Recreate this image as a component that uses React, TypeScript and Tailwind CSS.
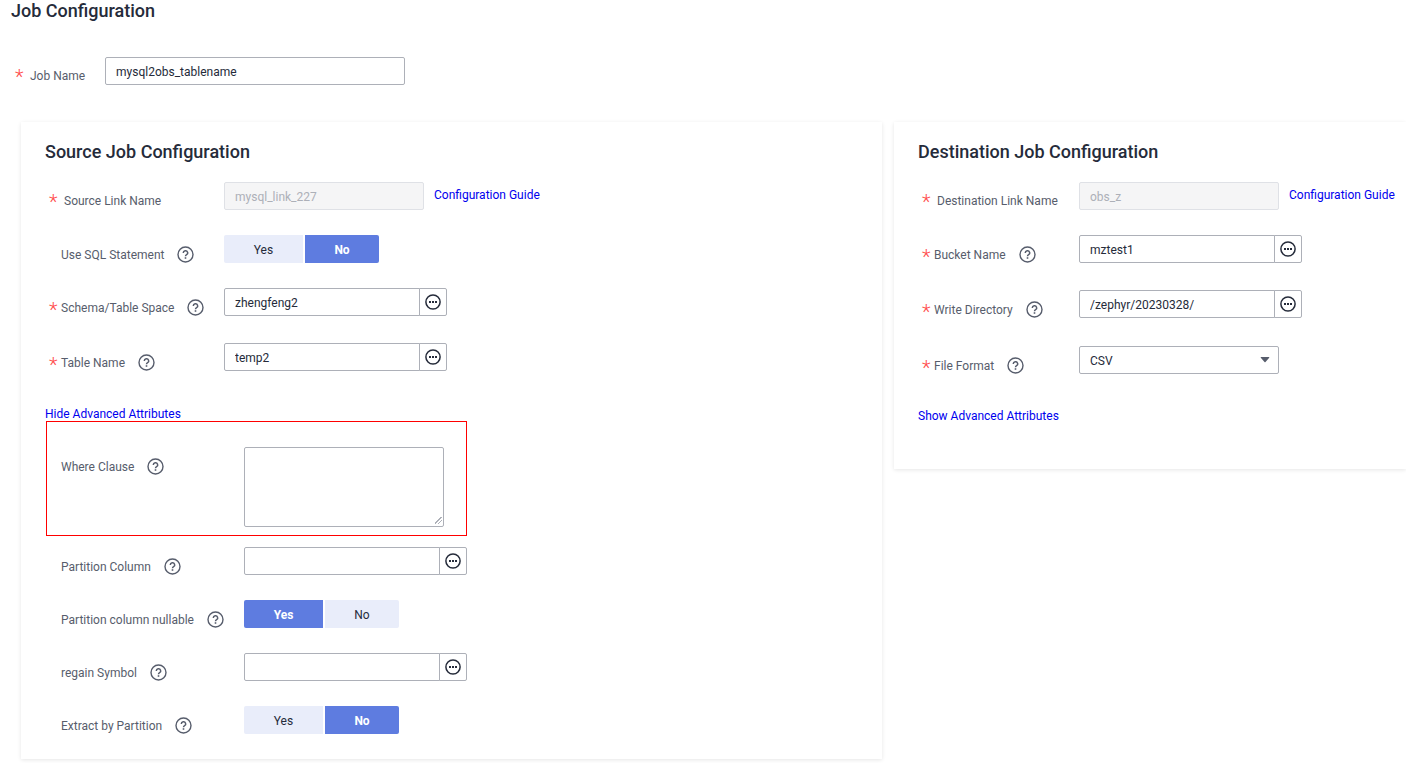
import { useId, useState, type ReactNode } from "react";

const FIELD =
  "h-7 shrink-0 rounded-[2px] border border-[#adb0b8] bg-white px-[10px] pt-[2px] text-[12px] text-[#252b3a] outline-none focus:border-[#5e7ce0]";
const LINK = "text-[12px] leading-4 text-[#0000ee]";

function HelpIcon() {
  return (
    <svg viewBox="0 0 17 17" className="size-[17px]" fill="none" stroke="#575d6c" aria-hidden="true">
      <circle cx="8.5" cy="8.5" r="7.5" strokeWidth="1.4" />
      <path d="M6.3 6.9a2.2 2.1 0 1 1 3.3 1.8c-.7.4-1.1.7-1.1 1.5" strokeWidth="1.5" />
      <path d="M8.5 11.2v1.6" strokeWidth="1.6" />
    </svg>
  );
}

function MoreIcon() {
  return (
    <svg viewBox="0 0 16 16" className="size-4" aria-hidden="true">
      <circle cx="8" cy="8" r="7.1" fill="none" stroke="#252b3a" strokeWidth="1.5" />
      <path d="M4 7h2v2H4zM7 7h2v2H7zM10 7h2v2h-2z" fill="#252b3a" />
    </svg>
  );
}

type LabelProps = {
  text: string;
  htmlFor?: string;
  id?: string;
  required?: boolean;
  help?: boolean;
  wide?: boolean;
};

function Label({ text, htmlFor, id, required, help, wide }: LabelProps) {
  return (
    <div className="flex h-5 items-center text-[12px] leading-5 whitespace-nowrap text-[#575d6c]">
      <span className={`h-5 shrink-0 text-[20px] font-light text-[#ff4c4c] ${wide ? "w-[15px] leading-[22px]" : "w-3 leading-6"}`}>
        {required ? "*" : ""}
      </span>
      <label htmlFor={htmlFor} id={id}>
        {text}
      </label>
      {help && (
        <button type="button" aria-label={`Help: ${text}`} className="mb-px ml-[13px]">
          <HelpIcon />
        </button>
      )}
    </div>
  );
}

type RowProps = LabelProps & { col: string; className?: string; tall?: boolean; children: ReactNode };

function Row({ col, className = "", tall, children, ...label }: RowProps) {
  return (
    <div className={`flex items-start ${tall ? "h-20" : "h-7"} ${className}`}>
      <div className={`shrink-0 pl-1 ${label.wide ? "pt-[9px]" : "pt-[10px]"} ${col}`}>
        <Label {...label} />
      </div>
      {children}
    </div>
  );
}

type FieldRowProps = { label: string; col: string; className?: string; required?: boolean; value?: string };

function LinkNameRow({ label, col, className, value }: FieldRowProps) {
  const id = useId();
  return (
    <Row text={label} htmlFor={id} col={col} className={className} required wide>
      <input
        id={id}
        disabled
        defaultValue={value}
        className="h-7 w-[200px] shrink-0 rounded-[2px] border border-[#dfe1e6] bg-[#f5f5f6] px-[10px] pt-[2px] text-[12px] text-[#adb0b8]"
      />
      <a href="#guide" className={`ml-[10px] pt-[5px] whitespace-nowrap ${LINK}`}>
        Configuration Guide
      </a>
    </Row>
  );
}

function PickerRow({ label, col, className, required, value = "" }: FieldRowProps) {
  const id = useId();
  return (
    <Row text={label} htmlFor={id} col={col} className={className} required={required} help>
      <div className="flex">
        <input id={id} defaultValue={value} className={`w-[196px] rounded-r-none ${FIELD}`} />
        <button
          type="button"
          aria-label={`Select ${label}`}
          className="-ml-px flex h-7 w-7 items-center justify-center rounded-r-[2px] border border-[#adb0b8] bg-white"
        >
          <MoreIcon />
        </button>
      </div>
    </Row>
  );
}

function ToggleRow({ label, col, className, initial }: FieldRowProps & { initial: boolean }) {
  const id = useId();
  const [on, setOn] = useState(initial);
  const active = "bg-[#5e7ce0] font-bold text-white";
  const idle = "bg-[#e9edfa] text-[#252b3a]";
  return (
    <Row text={label} id={id} col={col} className={className} help>
      <div role="group" aria-labelledby={id} className="flex gap-[2px] text-[12px]">
        <button type="button" aria-pressed={on} onClick={() => setOn(true)} className={`h-7 w-[79px] rounded-l-[2px] pt-[2px] ${on ? active : idle}`}>
          Yes
        </button>
        <button type="button" aria-pressed={!on} onClick={() => setOn(false)} className={`h-7 w-[74px] rounded-r-[2px] pt-[2px] ${on ? idle : active}`}>
          No
        </button>
      </div>
    </Row>
  );
}

function Card({ title, children }: { title: string; children: ReactNode }) {
  return (
    <section className="min-w-0 bg-white px-6 pt-[18px] shadow-[0_1px_4px_rgba(0,0,0,0.1)]">
      <h2 className="mb-[18px] text-[18px] leading-6 font-medium text-[#252b3a]">{title}</h2>
      {children}
    </section>
  );
}

const SOURCE = "w-[179px]";
const ADVANCED = "w-[199px]";
const DEST = "w-[161px]";

export default function App() {
  return (
    <main className="min-h-screen overflow-x-hidden bg-white pb-1 font-[Roboto,'Liberation_Sans',sans-serif]">
      <h1 className="pl-[11px] text-[18px] leading-[22px] font-medium text-[#252b3a]">Job Configuration</h1>

      <div className="mt-[35px] flex h-7 items-start pl-[15px]">
        <div className="w-[90px] shrink-0 pt-[9px]">
          <Label text="Job Name" htmlFor="job-name" required wide />
        </div>
        <input id="job-name" defaultValue="mysql2obs_tablename" className={`w-[300px] ${FIELD}`} />
      </div>

      <div className="mt-[37px] grid grid-cols-[861fr_512fr] items-start gap-3 pl-[21px]">
        <Card title="Source Job Configuration">
          <LinkNameRow label="Source Link Name" col={SOURCE} className="mb-[25px]" value="mysql_link_227" />
          <ToggleRow label="Use SQL Statement" col={SOURCE} className="mb-[25px]" initial={false} />
          <PickerRow label="Schema/Table Space" col={SOURCE} className="mb-[27px]" required value="zhengfeng2" />
          <PickerRow label="Table Name" col={SOURCE} className="mb-[35px]" required value="temp2" />
          <a href="#advanced" className={`block ${LINK}`}>
            Hide Advanced Attributes
          </a>
          <div className="relative mb-[11px] pt-[25px] pb-[9px]">
            <div className="pointer-events-none absolute -top-px bottom-0 left-px w-[421px] border border-[#ff0000]" />
            <Row text="Where Clause" htmlFor="where-clause" col={ADVANCED} help tall>
              <textarea
                id="where-clause"
                className="block h-20 w-[200px] resize rounded-[2px] border border-[#adb0b8] px-[10px] py-1 text-[12px] text-[#252b3a] outline-none [&::-webkit-resizer]:bg-[linear-gradient(135deg,transparent_0_42%,#adb0b8_42%_54%,transparent_54%_66%,#adb0b8_66%_78%,transparent_78%)] [&::-webkit-resizer]:bg-[length:7px_7px] [&::-webkit-resizer]:bg-[position:right_1px_bottom_2px] [&::-webkit-resizer]:bg-no-repeat"
              />
            </Row>
          </div>
          <PickerRow label="Partition Column" col={ADVANCED} className="mb-[25px]" />
          <ToggleRow label="Partition column nullable" col={ADVANCED} className="mb-[25px]" initial />
          <PickerRow label="regain Symbol" col={ADVANCED} className="mb-[25px]" />
          <ToggleRow label="Extract by Partition" col={ADVANCED} className="mb-[25px]" initial={false} />
        </Card>

        <Card title="Destination Job Configuration">
          <LinkNameRow label="Destination Link Name" col={DEST} className="mb-[25px]" value="obs_z" />
          <PickerRow label="Bucket Name" col={DEST} className="mb-[27px]" required value="mztest1" />
          <PickerRow label="Write Directory" col={DEST} className="mb-[28px]" required value="/zephyr/20230328/" />
          <Row text="File Format" htmlFor="file-format" col={DEST} className="mb-[34px]" required help>
            <div className="relative">
              <select id="file-format" defaultValue="CSV" className={`w-[200px] appearance-none ${FIELD}`}>
                <option>CSV</option>
                <option>JSON</option>
              </select>
              <svg viewBox="0 0 10 6" className="pointer-events-none absolute top-[11px] right-[9px] h-[6px] w-[10px]" fill="#575d6c" aria-hidden="true">
                <path d="M1.2 0h7.6q1 0 .4.8L5.5 5q-.5.5-1 0L.8.8Q.2 0 1.2 0z" />
              </svg>
            </div>
          </Row>
          <a href="#advanced" className={`mb-[45px] block ${LINK}`}>
            Show Advanced Attributes
          </a>
        </Card>
      </div>
    </main>
  );
}
